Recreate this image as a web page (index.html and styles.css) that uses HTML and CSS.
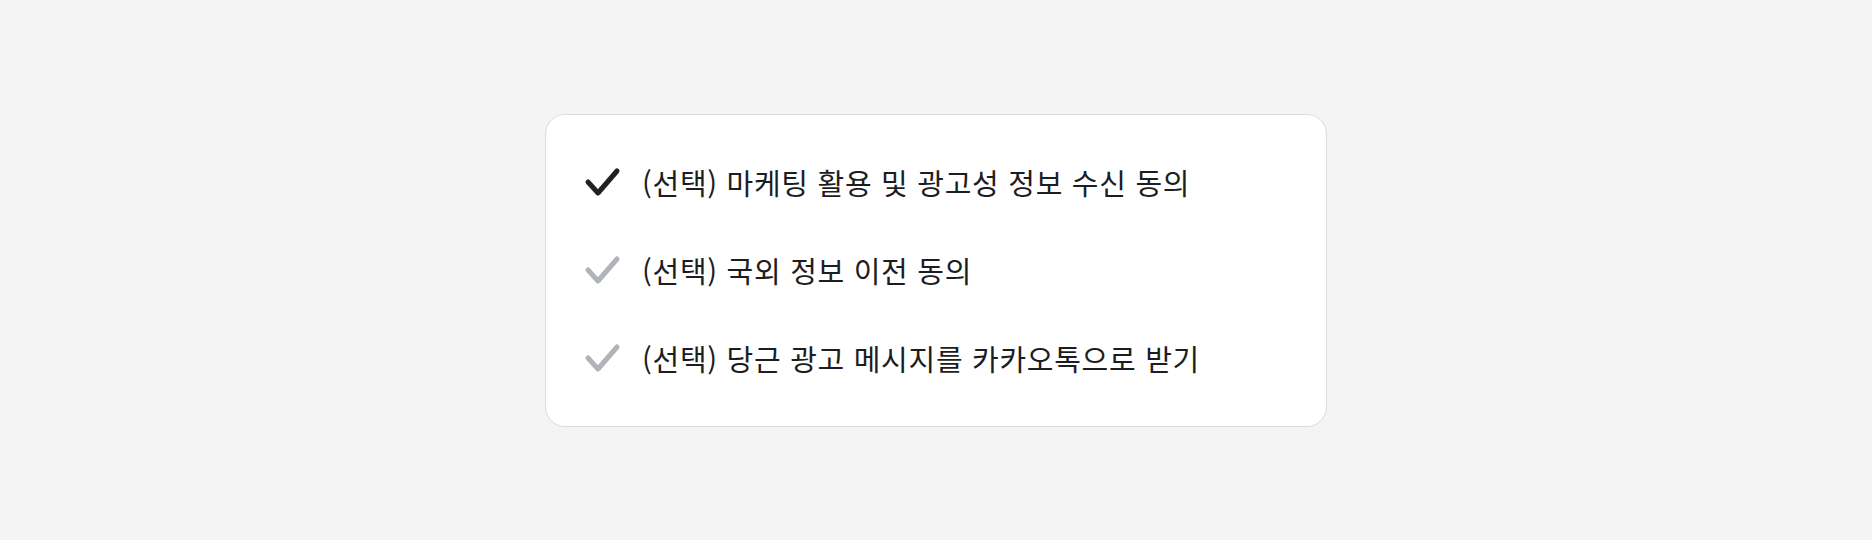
FILE: index.html
```html
<!DOCTYPE html>
<html lang="ko">
<head>
<meta charset="utf-8">
<link rel="stylesheet" href="styles.css">
</head>
<body>
<div class="page">
  <div class="card">
    <div class="row">
      <svg class="check" viewBox="0 0 40 32" width="40" height="32"><path class="on" d="M6 16 L16 27 L35 5"/></svg>
      <span class="label">(선택) 마케팅 활용 및 광고성 정보 수신 동의</span>
    </div>
    <div class="row">
      <svg class="check" viewBox="0 0 40 32" width="40" height="32"><path class="off" d="M6 16 L16 27 L35 5"/></svg>
      <span class="label">(선택) 국외 정보 이전 동의</span>
    </div>
    <div class="row">
      <svg class="check" viewBox="0 0 40 32" width="40" height="32"><path class="off" d="M6 16 L16 27 L35 5"/></svg>
      <span class="label">(선택) 당근 광고 메시지를 카카오톡으로 받기</span>
    </div>
  </div>
</div>
</body>
</html>
```
FILE: styles.css
```css
html, body {
  margin: 0;
  padding: 0;
  background: #f4f4f4;
}
.page {
  width: 1872px;
  height: 540px;
  display: flex;
  align-items: center;
  justify-content: center;
}
.card {
  box-sizing: border-box;
  width: 782px;
  height: 313px;
  background: #ffffff;
  border: 1px solid #dcdcdc;
  border-radius: 20px;
  padding: 47px 36px 0 36px;
  display: flex;
  flex-direction: column;
  gap: 48px;
}
.row {
  height: 40px;
  display: flex;
  align-items: center;
}
.check {
  flex: none;
  margin-right: 20px;
}
.check path {
  fill: none;
  stroke-width: 5;
  stroke-linecap: round;
  stroke-linejoin: round;
}
.check .on { stroke: #212124; }
.check .off { stroke: #b0b3ba; }
.label {
  font-family: "Noto Sans CJK KR", "Noto Sans", sans-serif;
  font-size: 29px;
  line-height: 40px;
  color: #1c1d21;
  letter-spacing: 0.7px;
}
```
